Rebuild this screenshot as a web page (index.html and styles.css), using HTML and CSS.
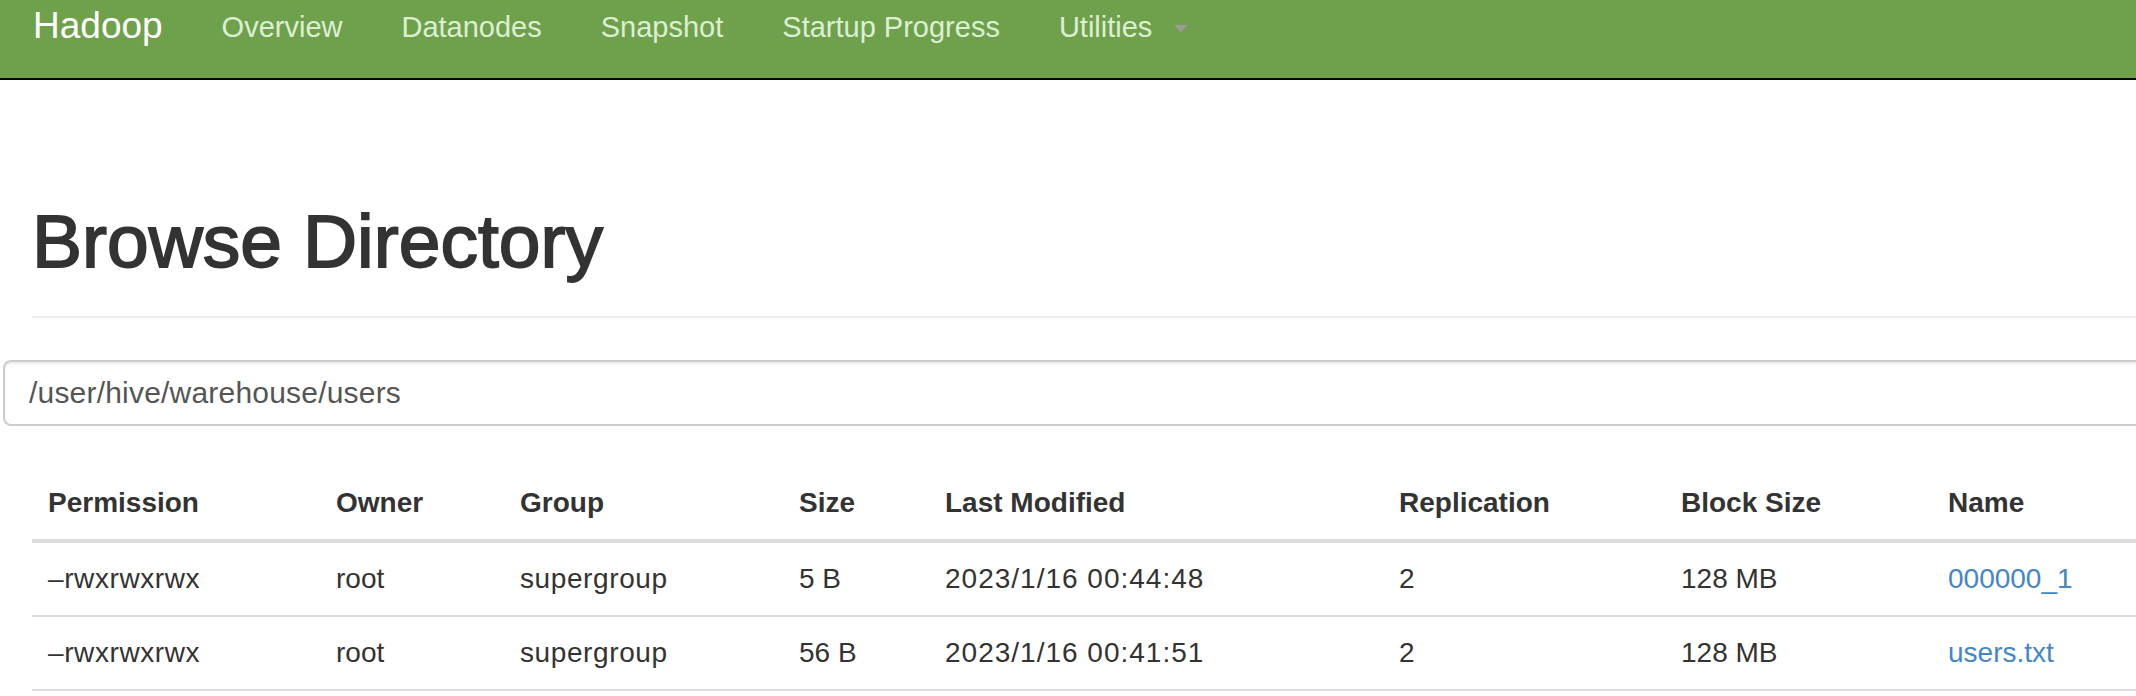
FILE: index.html
```html
<!DOCTYPE html>
<html lang="en">
<head>
<meta charset="utf-8">
<title>Browsing HDFS</title>
<link rel="stylesheet" href="styles.css">
</head>
<body>
<header class="navbar">
  <a class="brand" href="#">Hadoop</a>
  <nav class="nav">
    <a class="nav-link" href="#">Overview</a>
    <a class="nav-link" href="#">Datanodes</a>
    <a class="nav-link" href="#">Snapshot</a>
    <a class="nav-link" href="#">Startup Progress</a>
    <a class="nav-link" href="#">Utilities<span class="caret"></span></a>
  </nav>
</header>
<main class="page">
  <div class="page-header">
    <h1 class="title">Browse Directory</h1>
  </div>
  <form class="path-form">
    <input class="path-input" type="text" value="/user/hive/warehouse/users">
  </form>
  <table class="listing">
    <colgroup>
      <col class="c-perm"><col class="c-owner"><col class="c-group"><col class="c-size"><col class="c-mod"><col class="c-rep"><col class="c-block"><col class="c-name">
    </colgroup>
    <thead>
      <tr>
        <th>Permission</th><th>Owner</th><th>Group</th><th>Size</th><th>Last Modified</th><th>Replication</th><th>Block Size</th><th>Name</th>
      </tr>
    </thead>
    <tbody>
      <tr>
        <td class="perm">&ndash;rwxrwxrwx</td><td>root</td><td class="grp">supergroup</td><td>5 B</td><td class="date">2023/1/16 00:44:48</td><td>2</td><td>128 MB</td><td><a class="file-link" href="#">000000_1</a></td>
      </tr>
      <tr>
        <td class="perm">&ndash;rwxrwxrwx</td><td>root</td><td class="grp">supergroup</td><td>56 B</td><td class="date">2023/1/16 00:41:51</td><td>2</td><td>128 MB</td><td><a class="file-link" href="#">users.txt</a></td>
      </tr>
    </tbody>
  </table>
</main>
</body>
</html>
```
FILE: styles.css
```css
html, body {
  margin: 0;
  padding: 0;
  background: #ffffff;
  overflow: hidden;
}

body {
  font-family: "Liberation Sans", Arial, Helvetica, sans-serif;
  color: #333333;
  font-size: 28px;
  line-height: 40px;
}

.navbar {
  display: flex;
  align-items: flex-start;
  height: 78px;
  background: #6fa14c;
  border-bottom: 2px solid #000000;
  padding-left: 33px;
  box-sizing: content-box;
}

.brand {
  font-size: 37px;
  line-height: 40px;
  padding-top: 6px;
  padding-right: 59px;
  color: #ffffff;
  text-decoration: none;
}

.nav {
  display: flex;
  gap: 59px;
  padding-top: 7px;
}

.nav-link {
  display: flex;
  align-items: center;
  font-size: 29px;
  line-height: 40px;
  color: #dcefd2;
  text-decoration: none;
  white-space: nowrap;
}

.caret {
  display: inline-block;
  width: 0;
  height: 0;
  margin-left: 22px;
  margin-top: 2px;
  border-top: 7px solid #9c9c9c;
  border-left: 7px solid transparent;
  border-right: 7px solid transparent;
}

.page {
  padding-left: 32px;
  margin-right: -120px;
}

.page-header {
  margin-top: 121px;
  padding-bottom: 35px;
  border-bottom: 2px solid #eeeeee;
}

.title {
  margin: 0;
  font-size: 75px;
  line-height: 80px;
  font-weight: normal;
  color: #333333;
  -webkit-text-stroke: 1.8px #333333;
}

.path-form {
  margin: 42px 0 0 -29px;
}

.path-input {
  display: block;
  box-sizing: border-box;
  width: 100%;
  height: 66px;
  margin: 0;
  padding: 0 24px;
  font-family: "Liberation Sans", Arial, Helvetica, sans-serif;
  font-size: 30px;
  letter-spacing: 0.2px;
  color: #555555;
  background: #ffffff;
  border: 2px solid #cccccc;
  border-radius: 8px;
  box-shadow: inset 0 2px 2px rgba(0, 0, 0, 0.075);
  outline: none;
}

.listing {
  margin-top: 41px;
  width: 100%;
  border-collapse: collapse;
  table-layout: fixed;
}

.c-perm { width: 288px; }
.c-owner { width: 184px; }
.c-group { width: 279px; }
.c-size { width: 146px; }
.c-mod { width: 454px; }
.c-rep { width: 282px; }
.c-block { width: 267px; }

.listing th,
.listing td {
  padding: 16px;
  text-align: left;
  vertical-align: top;
  white-space: nowrap;
}

.listing th {
  font-weight: bold;
  border-bottom: 4px solid #dddddd;
}

.listing td {
  border-bottom: 2px solid #dddddd;
}

.listing .perm,
.listing .grp {
  letter-spacing: 0.6px;
}

.listing .date {
  letter-spacing: 1px;
}

.file-link {
  color: #4586c6;
  text-decoration: none;
}
```
